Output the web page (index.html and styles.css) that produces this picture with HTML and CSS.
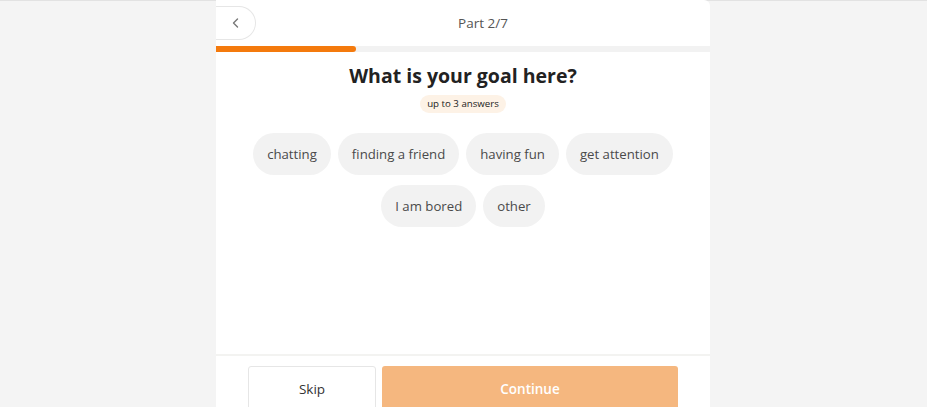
FILE: index.html
```html
<!DOCTYPE html>
<html>
<head>
<meta charset="utf-8">
<link rel="stylesheet" href="styles.css">
</head>
<body>
<div class="page">
  <div class="card">
    <header class="header">
      <button class="back" aria-label="Back">
        <svg width="10" height="12" viewBox="0 0 10 12"><path d="M6.5 2 L2.5 6 L6.5 10" fill="none" stroke="#777" stroke-width="1.4" stroke-linecap="round" stroke-linejoin="round"/></svg>
      </button>
      <span class="part">Part 2/7</span>
    </header>
    <div class="progress"><div class="fill" style="width:140px"></div></div>
    <main class="content">
      <h1 class="title">What is your goal here?</h1>
      <span class="badge">up to 3 answers</span>
      <div class="chips">
        <span class="chip">chatting</span>
        <span class="chip">finding a friend</span>
        <span class="chip">having fun</span>
        <span class="chip">get attention</span>
        <span class="chip">I am bored</span>
        <span class="chip">other</span>
      </div>
    </main>
    <footer class="footer">
      <button class="btn skip">Skip</button>
      <button class="btn continue">Continue</button>
    </footer>
  </div>
</div>
</body>
</html>
```
FILE: styles.css
```css
* { box-sizing: border-box; }
html, body { margin: 0; padding: 0; }
body {
  background: #f4f4f4;
  font-family: "Open Sans", "Noto Sans", sans-serif;
  height: 407px;
  overflow: hidden;
}
.page {
  height: 407px;
  border-top: 1px solid #e2e2e2;
  display: flex;
  justify-content: center;
}
.card {
  width: 494px;
  margin-top: -1px;
  margin-left: -1px;
  height: 408px;
  background: #fff;
  border-radius: 0 6px 0 0;
  display: flex;
  flex-direction: column;
}
.header {
  position: relative;
  height: 46px;
  display: flex;
  align-items: center;
  justify-content: center;
  padding-left: 40px;
}
.back {
  position: absolute;
  left: 0;
  top: 6px;
  width: 40px;
  height: 34px;
  border: 1px solid #e6e6e6;
  border-left: none;
  border-radius: 0 17px 17px 0;
  background: #fff;
  display: flex;
  align-items: center;
  justify-content: center;
  padding: 0 0 0 1px;
}
.part {
  font-size: 13.5px;
  color: #555;
}
.progress {
  height: 6px;
  background: #f2f2f2;
}
.fill {
  height: 6px;
  background: #f47a0d;
  border-radius: 0 3px 3px 0;
}
.content {
  display: flex;
  flex-direction: column;
  align-items: center;
  flex: 1;
}
.title {
  margin: 10px 0 0;
  font-size: 19.5px;
  line-height: 27px;
  font-weight: 700;
  color: #222;
}
.badge {
  margin-top: 6px;
  height: 18px;
  line-height: 18px;
  padding: 0 7px;
  border-radius: 9px;
  background: #fdf2e6;
  font-size: 9.7px;
  color: #222;
}
.chips {
  margin-top: 20px;
  width: 440px;
  display: flex;
  flex-wrap: wrap;
  justify-content: center;
  gap: 10px 7px;
}
.chip {
  height: 42px;
  line-height: 42px;
  padding: 0 14px;
  border-radius: 21px;
  background: #f2f2f2;
  font-size: 13.2px;
  color: #4a4a4a;
}
.footer {
  height: 54px;
  border-top: 2px solid #f3f3f1;
  display: flex;
  justify-content: center;
  gap: 6px;
  padding-top: 10px;
}
.btn {
  height: 48px;
  border-radius: 3px;
  font-family: "Open Sans", "Noto Sans", sans-serif;
  font-size: 13.5px;
  padding: 0 0 2px;
}
.skip {
  width: 128px;
  background: #fff;
  border: 1px solid #e6e6e6;
  color: #333;
  font-weight: 500;
}
.continue {
  width: 296px;
  background: #f5b77f;
  border: none;
  color: #fff;
  font-weight: 600;
}
```
